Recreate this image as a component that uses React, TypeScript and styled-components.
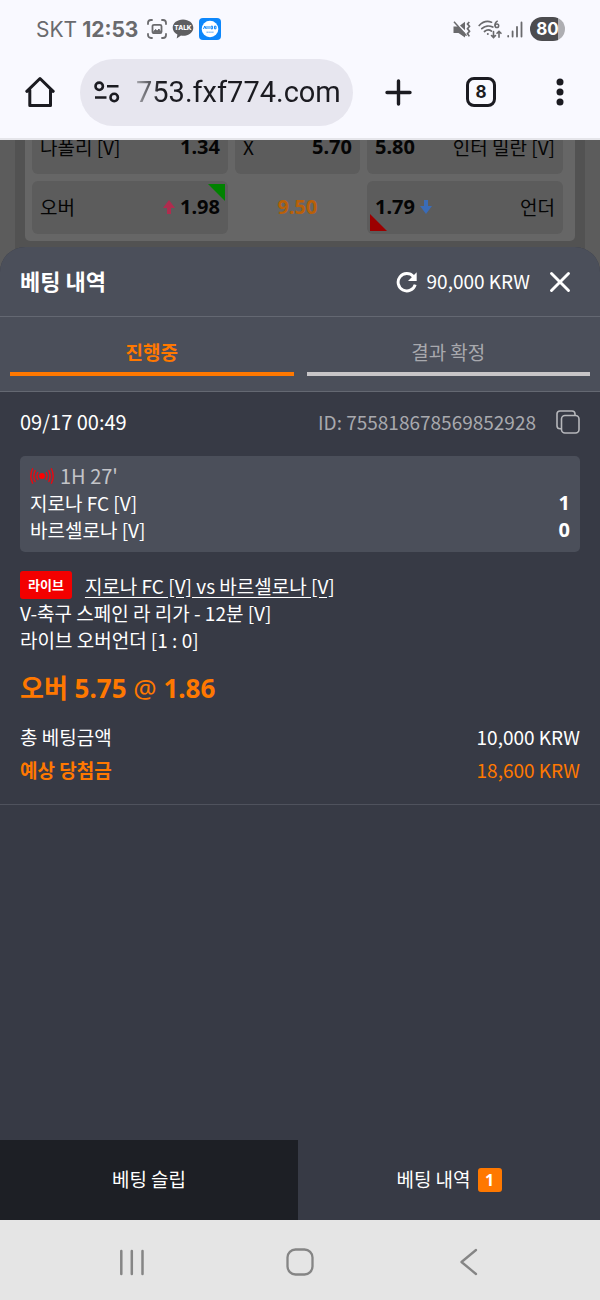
import React, { useState } from 'react';
import styled, { createGlobalStyle } from 'styled-components';

const color = {
  chrome: '#f9f9ff',
  pill: '#e7e6ef',
  ink: '#1b1b21',
  status: '#6a6a6d',
  accent: '#ff7800',
  panel: '#4b4f5a',
  sheet: '#373a45',
  line: '#646872',
  muted: '#a8a9ae',
};

const GlobalStyle = createGlobalStyle`
  *, *::before, *::after { box-sizing: border-box; }
  body {
    margin: 0;
    background: ${color.sheet};
    font-family: "Noto Sans CJK KR", "Noto Sans", sans-serif;
    font-size: 19px;
    line-height: 27px;
    color: #fff;
  }
  button {
    font: inherit;
    color: inherit;
    background: none;
    border: 0;
    padding: 0;
    margin: 0;
    cursor: pointer;
  }
  svg { display: block; flex: none; }
  p, h1, h2 { margin: 0; font-weight: 400; }
`;

const Screen = styled.div`
  display: flex;
  flex-direction: column;
  min-height: 100vh;
`;

const Label = styled.span`
  padding-bottom: 3px;
`;

/* ---------- phone and browser bars ---------- */

const Chrome = styled.header`
  background: ${color.chrome};
  color: ${color.ink};
  border-bottom: 2px solid #e5e5ea;
`;

const StatusBar = styled.div`
  display: flex;
  align-items: center;
  justify-content: space-between;
  height: 58px;
  padding: 0 35px 0 36px;
  font-family: Inter, Roboto, sans-serif;
  font-size: 21px;
  color: ${color.status};
`;

const StatusGroup = styled.div<{ $gap: number }>`
  display: flex;
  align-items: center;
  gap: ${(p) => p.$gap}px;
`;

const Clock = styled.span`
  padding-right: 4px;
  font-weight: 700;
`;

const Battery = styled.span`
  display: flex;
  align-items: center;
  justify-content: center;
  width: 35px;
  height: 24px;
  border-radius: 12px;
  background: linear-gradient(90deg, #4c4c4f 80%, #aeaeb2 80%);
  color: #fff;
  font-size: 17px;
  font-weight: 700;
`;

const Toolbar = styled.div`
  display: flex;
  align-items: center;
  height: 80px;
  padding: 0 30px 12px 25px;
  gap: 25px;
`;

const Address = styled.label`
  flex: 1;
  display: flex;
  align-items: center;
  min-width: 0;
  height: 67px;
  padding: 0 12px 0 14px;
  gap: 16px;
  border-radius: 34px;
  background: ${color.pill};
`;

const AddressInput = styled.input`
  flex: 1;
  min-width: 0;
  padding: 0;
  border: 0;
  outline: 0;
  font-family: Roboto, sans-serif;
  font-size: 29px;
  background: linear-gradient(90deg, #aaaab0, ${color.ink} 24px);
  background-clip: text;
  -webkit-background-clip: text;
  color: transparent;
`;

const ToolbarActions = styled.div`
  display: flex;
  align-items: center;
  gap: 54px;
  padding-left: 7px;
`;

const TabCount = styled.button`
  width: 30px;
  height: 30px;
  border: 3px solid ${color.ink};
  border-radius: 8px;
  font-family: Inter, sans-serif;
  font-size: 17px;
  line-height: 24px;
  font-weight: 700;
`;

const MoreButton = styled.button`
  display: flex;
  justify-content: center;
  width: 20px;
`;

/* ---------- dimmed odds board ---------- */

const Board = styled.section`
  display: flex;
  flex-direction: column;
  justify-content: flex-end;
  height: 132px;
  overflow: hidden;
  padding: 0 15px;
  background: #5c5c5c;
  color: #050505;
`;

const BoardColumn = styled.div`
  padding: 0 10px 31px;
  background: #525252;
`;

const OddsCard = styled.div`
  display: grid;
  grid-template-columns: 196fr 125fr 196fr;
  gap: 7px;
  padding: 7px 12px 7px 7px;
  border-radius: 0 0 5px 5px;
  background: #666;
`;

const OddsCell = styled.button<{ $plain?: boolean }>`
  position: relative;
  display: flex;
  align-items: center;
  justify-content: ${(p) => (p.$plain ? 'center' : 'space-between')};
  height: 53px;
  padding: 0 8px 2px;
  border-radius: 6px;
  background: ${(p) => (p.$plain ? 'none' : '#5c5c5c')};
`;

const Odds = styled.span<{ $line?: boolean }>`
  display: flex;
  align-items: center;
  gap: 5px;
  font-family: "Noto Sans", sans-serif;
  font-size: 20px;
  font-weight: 700;
  color: ${(p) => (p.$line ? '#b86008' : 'inherit')};
`;

const Corner = styled.i<{ $down?: boolean }>`
  position: absolute;
  width: 17px;
  height: 17px;
  ${(p) =>
    p.$down
      ? 'left: 3px; bottom: 3px; background: #9c0000; clip-path: polygon(0 0, 100% 100%, 0 100%);'
      : 'right: 3px; top: 3px; background: #008200; clip-path: polygon(0 0, 100% 0, 100% 100%);'}
`;

/* ---------- bet history sheet ---------- */

const Sheet = styled.main`
  position: relative;
  flex: 1;
  display: flex;
  flex-direction: column;
  margin-top: -25px;
  border-radius: 25px 25px 0 0;
  overflow: hidden;
  background: ${color.sheet};
`;

const SheetHeader = styled.header`
  display: flex;
  align-items: center;
  height: 70px;
  padding: 0 29px 0 20px;
  background: ${color.panel};
  border-bottom: 1px solid ${color.line};
`;

const SheetTitle = styled.h1`
  flex: 1;
  padding-bottom: 3px;
  font-size: 22px;
  font-weight: 700;
`;

const Balance = styled.button`
  display: flex;
  align-items: center;
  gap: 9px;
  margin-right: 19px;
`;

const Tabs = styled.div`
  display: flex;
  gap: 13px;
  padding: 13px 10px 15px;
  background: ${color.panel};
  border-bottom: 1px solid ${color.line};
`;

const Tab = styled.button<{ $active: boolean }>`
  flex: 1;
  height: 46px;
  border-bottom: 4px solid ${(p) => (p.$active ? color.accent : '#c8c6c8')};
  color: ${(p) => (p.$active ? color.accent : color.muted)};
  font-weight: ${(p) => (p.$active ? 700 : 400)};
`;

const Bet = styled.article`
  padding: 16px 20px 21px;
  border-bottom: 1px solid #4f525d;
`;

const Row = styled.div`
  display: flex;
  align-items: center;
  justify-content: space-between;
`;

const BetDate = styled.time`
  font-size: 20px;
`;

const BetId = styled.span`
  display: flex;
  align-items: center;
  gap: 20px;
  color: ${color.muted};
`;

const ScoreBox = styled.div`
  margin: 21px 0 19px;
  padding: 6px 10px 9px;
  border-radius: 5px;
  background: ${color.panel};
`;

const Period = styled.div`
  display: flex;
  align-items: center;
  gap: 6px;
  font-size: 20px;
  color: #c3c4c8;
`;

const Score = styled.span`
  font-family: "Noto Sans", sans-serif;
  font-size: 20px;
  font-weight: 700;
`;

const MatchLine = styled.div`
  display: flex;
  align-items: center;
  gap: 13px;
`;

const LiveBadge = styled.span`
  padding: 0 8px;
  border-radius: 3px;
  background: #f30000;
  font-size: 13px;
  line-height: 28px;
  font-weight: 700;
`;

const MatchLink = styled.a`
  color: inherit;
  text-decoration: underline;
  text-underline-offset: 3px;
`;

const Pick = styled.p`
  margin: 17px 0;
  font-family: "Noto Sans", "Noto Sans CJK KR", sans-serif;
  font-size: 26px;
  line-height: 36px;
  color: ${color.accent};
`;

const Amounts = styled.dl`
  display: flex;
  flex-direction: column;
  gap: 6px;
  margin: 0;
`;

const Amount = styled(Row)<{ $win?: boolean }>`
  color: ${(p) => (p.$win ? color.accent : 'inherit')};
  dt { font-weight: ${(p) => (p.$win ? 700 : 400)}; }
  dd { margin: 0; }
`;

const Footer = styled.div`
  display: flex;
  margin-top: auto;
`;

const FooterTab = styled.button<{ $dark?: boolean }>`
  flex: ${(p) => (p.$dark ? 298 : 302)} 0 0;
  display: flex;
  align-items: center;
  justify-content: center;
  gap: 7px;
  height: 80px;
  background: ${(p) => (p.$dark ? '#1d1f25' : 'none')};
`;

const Count = styled.span`
  width: 24px;
  border-radius: 3px;
  background: ${color.accent};
  font-family: "Noto Sans", sans-serif;
  font-size: 16px;
  line-height: 24px;
  font-weight: 700;
`;

const SystemNav = styled.nav`
  display: flex;
  align-items: center;
  justify-content: center;
  gap: 141px;
  height: 80px;
  padding-top: 4px;
  background: #e5e5e5;
  color: #858585;
`;

/* ---------- icons ---------- */

const CaptureIcon = () => (
  <svg width="20" height="20" viewBox="0 0 20 20" fill="none" stroke="currentColor" strokeWidth="1.8" strokeLinecap="round">
    <path d="M1 5V4a3 3 0 0 1 3-3h1M15 1h1a3 3 0 0 1 3 3v1M19 15v1a3 3 0 0 1-3 3h-1M5 19H4a3 3 0 0 1-3-3v-1" />
    <rect x="5.5" y="5.8" width="9" height="8.4" rx="1.5" />
    <path d="M6 13.500l2.500-3 1.800 1.500 1.600-2 2.400 3.500z" fill="currentColor" strokeWidth="1" />
  </svg>
);

const TalkIcon = () => (
  <svg width="22" height="20" viewBox="0 0 22 20">
    <path d="M11 0.500c5.800 0 10.300 3.600 10.300 8.200s-4.500 8.100-10.300 8.100c-.7 0-1.400 0-2-.2L4.700 19.500l.7-4C2.600 14.100.7 11.600.7 8.700.7 4.100 5.200.5 11 .5z" fill="#5e5e61" />
    <text x="11" y="11.200" textAnchor="middle" fontSize="6.500" fontWeight="800" fontFamily="Inter" fill="#fff">TALK</text>
  </svg>
);

const AppIcon = () => (
  <svg width="22" height="22" viewBox="0 0 22 22">
    <rect width="22" height="22" rx="4" fill="#0d87fb" />
    <circle cx="11" cy="11" r="8.300" fill="#fff" />
    <path d="M4.500 11l1.300-3 1.300 3M8 8v3M10 8v3M12 8.200h1.600v2.600H12zM15.500 8.200h1.500v2.600h-1.500z" fill="none" stroke="#0d87fb" strokeWidth="1" />
    <path d="M7.500 14.300h7" stroke="#7dbcf8" strokeWidth="1.400" strokeDasharray="1.400 .5" />
  </svg>
);

const MuteIcon = () => (
  <svg width="18" height="17" viewBox="0 0 18 17" fill="currentColor">
    <path d="M.5 5.500h4.500L12 12v4.500L5.500 12H.5z" />
    <path d="M7 4.500L12 .8v8.500z" />
    <path d="M1 .8l12.500 14" stroke="currentColor" strokeWidth="1.500" />
    <path d="M16.300 1l-1.800 2 2 2.300-2 2.500 2 2.400-2 2.400 1.800 2.800" fill="none" stroke="currentColor" strokeWidth="1.700" />
  </svg>
);

const WifiIcon = () => (
  <svg width="25" height="19" viewBox="0 0 25 19" fill="none" stroke="currentColor" strokeWidth="1.700" strokeLinecap="round">
    <path d="M1.200 5.500C4.500 2 9.500.8 13.500 2.200M3.800 8.700c3-2.900 7.500-3.500 11-1.600M6.500 11.500c2-1.800 5-1.900 7-.4" />
    <circle cx="9.800" cy="14" r="1" fill="currentColor" stroke="none" />
    <path d="M15.500 11.500v5.800M13.500 15.500l2 2 2-2M21 17.300v-6M19 13.300l2-2 2 2" strokeWidth="1.600" />
    <path d="M19.300 1.200c-1.800 1-2.500 2.800-2.300 4.500" strokeWidth="1.500" />
    <circle cx="18.900" cy="5.800" r="1.800" strokeWidth="1.500" />
  </svg>
);

const SignalIcon = () => (
  <svg width="16" height="17" viewBox="0 0 16 17" stroke="currentColor" strokeWidth="1.800" strokeLinecap="round">
    <path d="M1.200 15v.6M5.600 10.500v5.100M10 6v9.600M14.500 1.500v14.100" />
  </svg>
);

const HomeIcon = () => (
  <svg width="30" height="32" viewBox="0 0 30 32" fill="none" stroke={color.ink} strokeWidth="3" strokeLinejoin="round" strokeLinecap="round">
    <path d="M1.800 15.300L15 2.500l13.200 12.800M4.800 14v15.500h20.700V14" />
  </svg>
);

const SiteIcon = () => (
  <svg width="26" height="22" viewBox="0 0 26 22" fill="none" stroke={color.ink} strokeWidth="2.600">
    <circle cx="5.200" cy="5.300" r="3.700" />
    <path d="M13 5.300h11.500M1 16.500h11.500" />
    <circle cx="20.200" cy="16.500" r="3.700" />
  </svg>
);

const PlusIcon = () => (
  <svg width="27" height="27" viewBox="0 0 27 27" stroke={color.ink} strokeWidth="3.400" strokeLinecap="round">
    <path d="M13.500 2v23M2 13.500h23" />
  </svg>
);

const MoreIcon = () => (
  <svg width="8" height="28" viewBox="0 0 8 28" fill={color.ink}>
    <circle cx="4" cy="4" r="3.500" />
    <circle cx="4" cy="14" r="3.500" />
    <circle cx="4" cy="24" r="3.500" />
  </svg>
);

const ArrowIcon = ({ down }: { down?: boolean }) => (
  <svg width="12" height="16" viewBox="0 0 12 16" fill={down ? '#3a6cb8' : '#b02c4e'}>
    <path d={down ? 'M4 1h4v6h4l-6 8-6-8h4z' : 'M4 15h4V9h4L6 1 0 9h4z'} />
  </svg>
);

const RefreshIcon = () => (
  <svg width="22" height="22" viewBox="0 0 22 22" fill="none" stroke="#fff">
    <path d="M19.200 13.600A8.700 8.700 0 1 1 17.400 5.500" strokeWidth="2.900" />
    <path d="M20.700 1.300v8.700h-8.700z" fill="#fff" stroke="none" />
  </svg>
);

const CloseIcon = () => (
  <svg width="22" height="22" viewBox="0 0 22 22" stroke="#fff" strokeWidth="2.900" strokeLinecap="round">
    <path d="M2.500 2.500l17 17M19.500 2.500l-17 17" />
  </svg>
);

const CopyIcon = () => (
  <svg width="24" height="24" viewBox="0 0 24 24" fill="none" stroke="#b6b7bb" strokeWidth="1.600">
    <rect x="5.500" y="5.500" width="17.500" height="17.500" rx="3.500" />
    <path d="M5.500 18.800H4A3 3 0 0 1 1 16V3.800A3 3 0 0 1 4 1h12a3 3 0 0 1 3 3v1.500" />
  </svg>
);

const LiveIcon = () => (
  <svg width="24" height="18" viewBox="0 0 24 18" fill="none" stroke="#ea0810" strokeWidth="1.400" strokeLinecap="round">
    <circle cx="12" cy="9" r="2.900" fill="#f00" stroke="none" />
    <path d="M7.800 5.500q-1.800 3.500 0 7M5.200 3.500q-2.800 5.500 0 11M2.600 1.800q-3.600 7.200 0 14.400M16.200 5.500q1.800 3.500 0 7M18.800 3.500q2.800 5.500 0 11M21.400 1.800q3.600 7.200 0 14.400" />
  </svg>
);

const RecentsIcon = () => (
  <svg width="26" height="28" viewBox="0 0 26 28" stroke="currentColor" strokeWidth="2.500" strokeLinecap="round">
    <path d="M2.300 3v23M12.800 3v23M23.500 3v23" />
  </svg>
);

const NavHomeIcon = () => (
  <svg width="28" height="28" viewBox="0 0 28 28" fill="none" stroke="currentColor" strokeWidth="2.300">
    <rect x="1.500" y="1.500" width="25" height="25" rx="8" />
  </svg>
);

const BackIcon = () => (
  <svg width="26" height="28" viewBox="0 0 26 28" fill="none" stroke="currentColor" strokeWidth="2.300" strokeLinecap="round" strokeLinejoin="round">
    <path d="M21 2L6.500 14 21 26" />
  </svg>
);

const tabs = ['진행중', '결과 확정'];

export default function App() {
  const [tab, setTab] = useState(0);

  return (
    <>
      <GlobalStyle />
      <Screen>
        <Chrome>
          <StatusBar>
            <StatusGroup $gap={5}>
              <span>SKT</span>
              <Clock>12:53</Clock>
              <StatusGroup $gap={5}>
                <CaptureIcon />
                <TalkIcon />
                <AppIcon />
              </StatusGroup>
            </StatusGroup>
            <StatusGroup $gap={7}>
              <MuteIcon />
              <StatusGroup $gap={4}>
                <WifiIcon />
                <SignalIcon />
              </StatusGroup>
              <Battery>80</Battery>
            </StatusGroup>
          </StatusBar>
          <Toolbar>
            <button aria-label="홈"><HomeIcon /></button>
            <Address>
              <SiteIcon />
              <AddressInput aria-label="주소" defaultValue="753.fxf774.com" />
            </Address>
            <ToolbarActions>
              <button aria-label="새 탭"><PlusIcon /></button>
              <TabCount>8</TabCount>
              <MoreButton aria-label="메뉴"><MoreIcon /></MoreButton>
            </ToolbarActions>
          </Toolbar>
        </Chrome>

        <Board>
          <BoardColumn>
            <OddsCard>
              <OddsCell><span>나폴리 [V]</span><Odds>1.34</Odds></OddsCell>
              <OddsCell><span>X</span><Odds>5.70</Odds></OddsCell>
              <OddsCell><Odds>5.80</Odds><span>인터 밀란 [V]</span></OddsCell>
              <OddsCell>
                <span>오버</span>
                <Odds><ArrowIcon />1.98</Odds>
                <Corner />
              </OddsCell>
              <OddsCell $plain><Odds $line>9.50</Odds></OddsCell>
              <OddsCell>
                <Odds>1.79<ArrowIcon down /></Odds>
                <span>언더</span>
                <Corner $down />
              </OddsCell>
            </OddsCard>
          </BoardColumn>
        </Board>

        <Sheet>
          <SheetHeader>
            <SheetTitle>베팅 내역</SheetTitle>
            <Balance><RefreshIcon /><Label>90,000 KRW</Label></Balance>
            <button aria-label="닫기"><CloseIcon /></button>
          </SheetHeader>
          <Tabs>
            {tabs.map((label, i) => (
              <Tab key={label} $active={i === tab} onClick={() => setTab(i)}>{label}</Tab>
            ))}
          </Tabs>

          <Bet>
            <Row>
              <BetDate>09/17 00:49</BetDate>
              <BetId>
                ID: 755818678569852928
                <button aria-label="복사"><CopyIcon /></button>
              </BetId>
            </Row>
            <ScoreBox>
              <Period><LiveIcon />1H 27'</Period>
              <Row><span>지로나 FC [V]</span><Score>1</Score></Row>
              <Row><span>바르셀로나 [V]</span><Score>0</Score></Row>
            </ScoreBox>
            <MatchLine>
              <LiveBadge>라이브</LiveBadge>
              <MatchLink href="#match">지로나 FC [V] vs 바르셀로나 [V]</MatchLink>
            </MatchLine>
            <p>V-축구 스페인 라 리가 - 12분 [V]</p>
            <p>라이브 오버언더 [1 : 0]</p>
            <Pick><b>오버 5.75</b> @ <b>1.86</b></Pick>
            <Amounts>
              <Amount><dt>총 베팅금액</dt><dd>10,000 KRW</dd></Amount>
              <Amount $win><dt>예상 당첨금</dt><dd>18,600 KRW</dd></Amount>
            </Amounts>
          </Bet>

          <Footer>
            <FooterTab $dark><Label>베팅 슬립</Label></FooterTab>
            <FooterTab><Label>베팅 내역</Label><Count>1</Count></FooterTab>
          </Footer>
        </Sheet>

        <SystemNav>
          <button aria-label="최근 앱"><RecentsIcon /></button>
          <button aria-label="홈 화면"><NavHomeIcon /></button>
          <button aria-label="뒤로"><BackIcon /></button>
        </SystemNav>
      </Screen>
    </>
  );
}
